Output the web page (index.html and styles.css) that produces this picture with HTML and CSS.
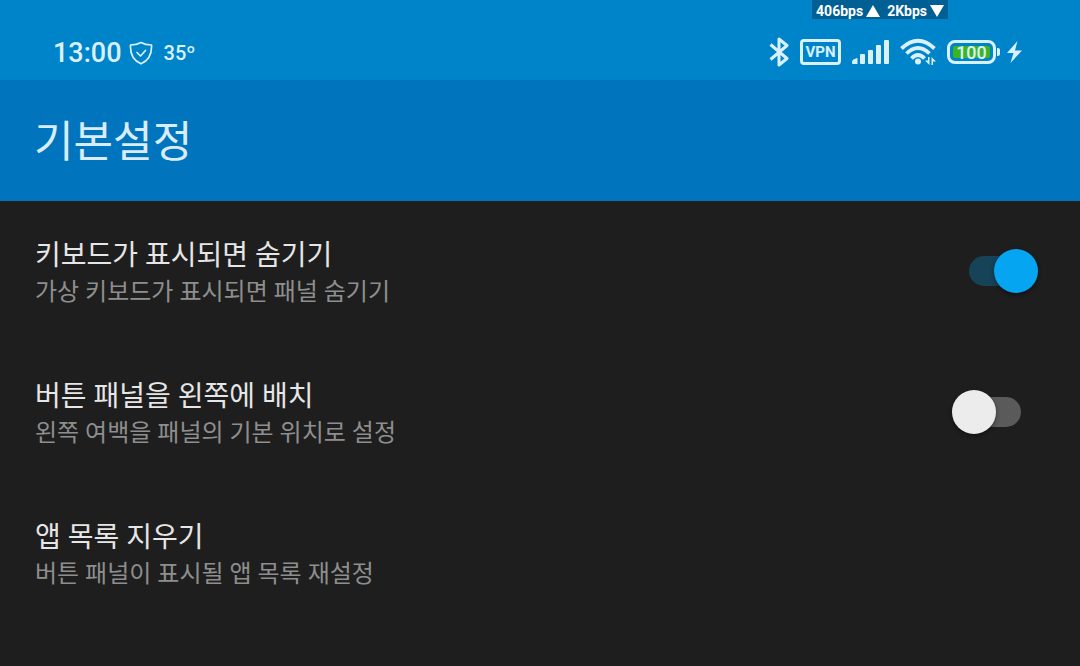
FILE: index.html
```html
<!DOCTYPE html>
<html lang="ko">

<head>
    <meta charset="utf-8">
    <meta name="viewport" content="width=device-width, initial-scale=1">
    <title>기본설정</title>
    <link rel="stylesheet" href="styles.css">
</head>

<body>
    <div class="status-bar">
        <!-- Network speed overlay -->
        <div class="net-speed">
            <span>406bps</span>
            <svg width="14" height="12" viewBox="0 0 14 12"><path d="M7 0L14 12H0z" fill="#fff"/></svg>
            <span class="down">2Kbps</span>
            <svg width="14" height="12" viewBox="0 0 14 12"><path d="M0 0H14L7 12z" fill="#fff"/></svg>
        </div>

        <div class="status-left">
            <span class="clock">13:00</span>
            <svg width="24" height="24" viewBox="0 0 24 24" fill="none" stroke="#d9f1ff" stroke-width="1.7" stroke-linejoin="round" stroke-linecap="round">
                <path d="M12 1.5C9 3.3 5.5 4 1.5 4C1 13 4 19.5 12 22.8C20 19.5 23 13 22.5 4C18.5 4 15 3.3 12 1.5z"/>
                <path d="M8 11.5L11.5 15L16.5 9.5"/>
            </svg>
            <span class="temp">35º</span>
        </div>

        <div class="status-right">
            <!-- Bluetooth -->
            <svg width="20" height="30" viewBox="0 0 20 30" fill="none" stroke="#d9f1ff" stroke-width="3" stroke-linejoin="round">
                <path d="M1.5 7.5L18 21.5L10 28V2L18 8.5L1.5 22.5"/>
            </svg>
            <span class="vpn">VPN</span>
            <!-- Mobile signal -->
            <svg width="37" height="24" viewBox="0 0 37 24" fill="#d9f1ff">
                <path d="M0 22Q0 19 5.500 18V24H1Q0 24 0 23z"/>
                <rect x="8" y="14" width="5" height="10" rx="1"/>
                <rect x="16" y="10" width="5" height="14" rx="1"/>
                <rect x="24" y="5" width="5" height="19" rx="1"/>
                <rect x="32" y="0" width="5" height="24" rx="1"/>
            </svg>
            <!-- Wi-Fi -->
            <svg width="36" height="28" viewBox="0 0 36 28" fill="none" stroke="#d9f1ff" stroke-width="3.8">
                <path d="M1.5 10.5Q18 -5 34.5 10.5"/>
                <path d="M6.5 15.5Q18 4.5 29.5 15.5"/>
                <path d="M11.5 20.5Q18 13.5 24.5 20.5"/>
                <circle cx="18" cy="23.5" r="3" fill="#d9f1ff" stroke="none"/>
                <path d="M29.500 19V27L25 22.500H28V19zM31.500 27V19L36 23.500H33V27z" fill="#d9f1ff" stroke="none"/>
            </svg>
            <div class="battery"><span>100</span></div>
            <!-- Charging -->
            <svg width="15" height="22" viewBox="0 0 15 22"><path d="M10.5 0L0 12H6.500L3.500 22L15 9.500H8z" fill="#d9f1ff"/></svg>
        </div>
    </div>

    <header class="app-bar">
        <h1>기본설정</h1>
    </header>

    <main class="settings">
        <label class="row">
            <span class="text">
                <span class="title">키보드가 표시되면 숨기기</span>
                <span class="summary">가상 키보드가 표시되면 패널 숨기기</span>
            </span>
            <input type="checkbox" role="switch" class="switch" checked>
        </label>
        <label class="row">
            <span class="text">
                <span class="title">버튼 패널을 왼쪽에 배치</span>
                <span class="summary">왼쪽 여백을 패널의 기본 위치로 설정</span>
            </span>
            <input type="checkbox" role="switch" class="switch">
        </label>
        <button type="button" class="row">
            <span class="text">
                <span class="title">앱 목록 지우기</span>
                <span class="summary">버튼 패널이 표시될 앱 목록 재설정</span>
            </span>
        </button>
    </main>
</body>

</html>
```

FILE: styles.css
```css
* {
    box-sizing: border-box;
}

body {
    margin: 0;
    background-color: #1e1e1e;
    font-family: Roboto, "Noto Sans CJK KR", sans-serif;
}

svg {
    display: block;
    flex: none;
}

.status-bar {
    position: relative;
    display: flex;
    justify-content: space-between;
    align-items: center;
    height: 80px;
    padding: 24px 58px 0 53px;
    background-color: #0084c9;
    color: #d9f1ff;
}

/* drawn over the status bar by the speed meter */
.net-speed {
    position: absolute;
    top: 0;
    right: 132px;
    display: flex;
    align-items: center;
    gap: 3px;
    height: 19px;
    padding: 2px 4px 0;
    background-color: #005f93;
    color: #fff;
    font-size: 14px;
    font-weight: 700;
}

.net-speed .down {
    margin-left: 4px;
}

.status-left,
.status-right {
    display: flex;
    align-items: center;
}

.status-left {
    gap: 7px;
    padding-top: 1px;
}

.clock {
    font-size: 27px;
    font-weight: 500;
}

.temp {
    margin-left: 4px;
    font-size: 20px;
    font-weight: 500;
}

.status-right {
    gap: 11px;
}

.vpn {
    width: 41px;
    height: 26px;
    border: 3px solid #d9f1ff;
    border-radius: 4px;
    font-size: 15px;
    font-weight: 700;
    line-height: 20px;
    text-align: center;
}

.battery {
    position: relative;
    width: 49px;
    height: 24px;
    padding: 3px;
    border: 3px solid #d9f1ff;
    border-radius: 8px;
}

.battery span {
    display: block;
    height: 12px;
    border-radius: 2px;
    background-color: #3cb521;
    font-size: 18px;
    font-weight: 500;
    line-height: 14px;
    text-align: center;
}

.battery::after {
    content: "";
    position: absolute;
    top: 5px;
    right: -7px;
    width: 3px;
    height: 8px;
    border-radius: 0 2px 2px 0;
    background-color: #d9f1ff;
}

.app-bar {
    display: flex;
    align-items: center;
    height: 121px;
    padding: 0 34px 6px;
    background-color: #0075bd;
}

.app-bar h1 {
    margin: 0;
    color: #d9ecf8;
    font-size: 43px;
    font-weight: 400;
}

.row {
    display: flex;
    justify-content: space-between;
    align-items: center;
    width: 100%;
    min-height: 141px;
    padding: 0 42px 2px 35px;
    border: none;
    background: none;
    font-family: inherit;
    text-align: left;
    cursor: pointer;
}

.text {
    padding-top: 6px;
}

.title,
.summary {
    display: block;
    line-height: 36px;
}

.title {
    color: #e6e6e6;
    font-size: 28px;
}

.summary {
    color: #8e8e8e;
    font-size: 24px;
}

.switch {
    appearance: none;
    position: relative;
    flex: none;
    width: 52px;
    height: 30px;
    margin: 0 17px 0 0;
    border-radius: 15px;
    background-color: #5a5a5a;
    cursor: pointer;
}

.switch::before {
    content: "";
    position: absolute;
    top: -7px;
    left: -17px;
    width: 44px;
    height: 44px;
    border-radius: 50%;
    background-color: #ececec;
    box-shadow: 0 2px 4px rgba(0, 0, 0, 0.4);
}

.switch:checked {
    background-color: #174358;
}

.switch:checked::before {
    left: 25px;
    background-color: #05a5f2;
}
```
